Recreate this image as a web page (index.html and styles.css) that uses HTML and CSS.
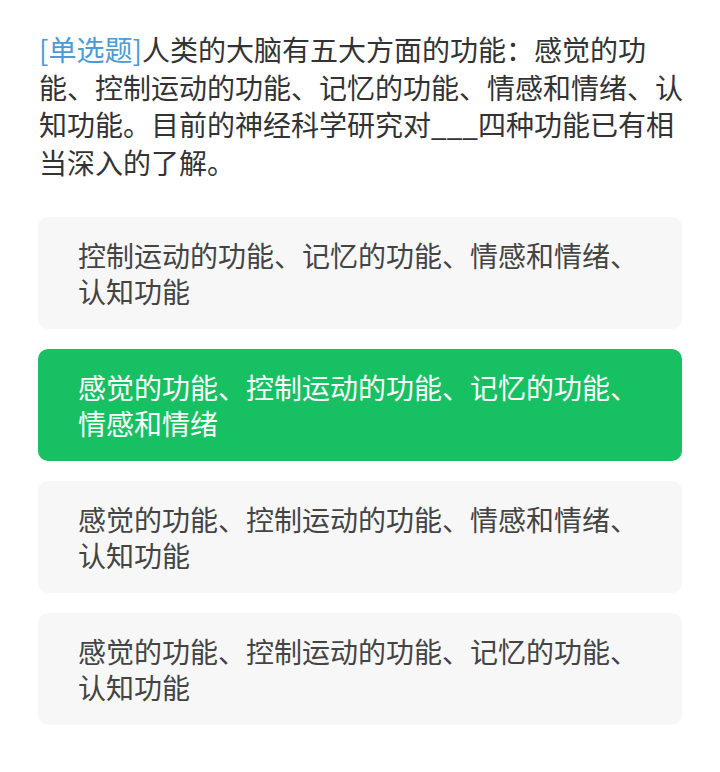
FILE: index.html
```html
<!DOCTYPE html>
<html lang="zh-CN">
<head>
  <meta charset="UTF-8">
  <title>单选题</title>
  <meta name="viewport" content="width=device-width, initial-scale=1.0">
  <link rel="stylesheet" href="styles.css">
</head>
<body>

<div class="question">
  <p class="stem"><span class="tag">[单选题]</span>人类的大脑有五大方面的功能：感觉的功能、控制运动的功能、记忆的功能、情感和情绪、认知功能。目前的神经科学研究对___四种功能已有相当深入的了解。</p>

  <div class="options">
    <div class="option">控制运动的功能、记忆的功能、情感和情绪、认知功能</div>
    <div class="option selected">感觉的功能、控制运动的功能、记忆的功能、情感和情绪</div>
    <div class="option">感觉的功能、控制运动的功能、情感和情绪、认知功能</div>
    <div class="option">感觉的功能、控制运动的功能、记忆的功能、认知功能</div>
  </div>
</div>

</body>
</html>
```

FILE: styles.css
```css
* {
  box-sizing: border-box;
}
body {
  margin: 0;
  font-family: "Noto Sans CJK SC", "Noto Sans", sans-serif;
  background: #fff;
  color: #333;
}
.question {
  padding: 31px 38px 0 38px;
}
.stem {
  margin: 0 -2px 36px 1px;
  font-size: 28px;
  line-height: 37.5px;
  color: #333;
}
.tag {
  color: #4a9cd6;
}
.options {
  display: flex;
  flex-direction: column;
  gap: 20px;
}
.option {
  background: #f7f7f7;
  border-radius: 10px;
  padding: 20px 40px;
  font-size: 28px;
  line-height: 36px;
  color: #444;
}
.option.selected {
  background: #17c163;
  color: #fff;
}
```
